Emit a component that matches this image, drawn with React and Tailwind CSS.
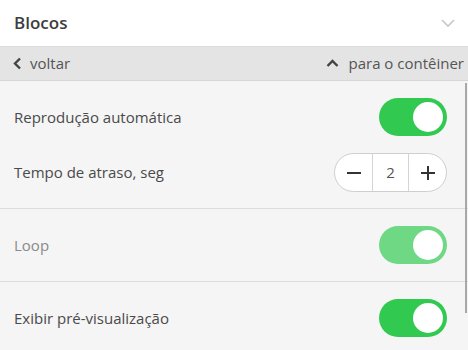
import React, { useState } from "react";

function Toggle({ on, disabled, onClick }) {
    return (
        <button
            onClick={onClick}
            className={`w-[68px] h-[38px] rounded-full flex items-center px-[4px] shrink-0 ${on ? "justify-end" : "justify-start"} ${disabled ? "bg-[#6fd884]" : "bg-[#31c950]"}`}
        >
            <span className="w-[30px] h-[30px] rounded-full bg-white block" />
        </button>
    );
}

export default function App() {
    const [auto, setAuto] = useState(true);
    const [preview, setPreview] = useState(true);
    const [delay, setDelay] = useState(2);

    return (
        <div className="relative w-[468px] h-[350px] overflow-hidden bg-[#f5f5f5] text-[#4a4a4a] font-['Open_Sans',sans-serif]">
            {/* header */}
            <div className="h-[47px] bg-white border-b border-[#dcdcdc] flex items-center justify-between pl-[14px] pr-[12px]">
                <span className="text-[17px] font-semibold text-[#3d3d3d]">Blocos</span>
                <svg width="16" height="10" viewBox="0 0 16 10" fill="none" stroke="#c8c8c8" strokeWidth="1.6">
                    <path d="M2 2l6 6 6-6" />
                </svg>
            </div>

            {/* nav */}
            <div className="h-[34px] bg-[#e4e4e4] border-b border-[#d6d6d6] flex items-center justify-between pl-[13px] pr-[4px] text-[15px] text-[#555]">
                <div className="flex items-center gap-[8px]">
                    <svg width="9" height="13" viewBox="0 0 9 13" fill="none" stroke="#444" strokeWidth="2.4">
                        <path d="M7 1.5l-5 5 5 5" />
                    </svg>
                    <span>voltar</span>
                </div>
                <div className="flex items-center gap-[9px]">
                    <svg width="13" height="9" viewBox="0 0 13 9" fill="none" stroke="#444" strokeWidth="2.4">
                        <path d="M1.5 7l5-5 5 5" />
                    </svg>
                    <span>para o contêiner</span>
                </div>
            </div>

            {/* section 1 */}
            <div className="border-b border-[#dcdcdc] pl-[14px] pr-[21px] pt-[17px] pb-[16px] flex flex-col gap-[17px] text-[15px]">
                <div className="flex items-center justify-between">
                    <span>Reprodução automática</span>
                    <Toggle on={auto} onClick={() => setAuto(!auto)} />
                </div>
                <div className="flex items-center justify-between">
                    <span>Tempo de atraso, seg</span>
                    <div className="w-[113px] h-[39px] rounded-full border border-[#cfcfcf] bg-white flex items-stretch overflow-hidden">
                        <button onClick={() => setDelay(Math.max(0, delay - 1))} className="w-[37px] flex items-center justify-center">
                            <svg width="14" height="2" viewBox="0 0 14 2"><rect width="14" height="2" fill="#333" /></svg>
                        </button>
                        <div className="flex-1 border-x border-[#d4d4d4] flex items-center justify-center text-[15px] text-[#555]">{delay}</div>
                        <button onClick={() => setDelay(delay + 1)} className="w-[37px] flex items-center justify-center">
                            <svg width="14" height="14" viewBox="0 0 14 14"><rect y="6" width="14" height="2" fill="#333" /><rect x="6" width="2" height="14" fill="#333" /></svg>
                        </button>
                    </div>
                </div>
            </div>

            {/* section 2 */}
            <div className="border-b border-[#dcdcdc] pl-[14px] pr-[21px] py-[17px] flex items-center justify-between text-[15px]">
                <span className="text-[#8a8a8a]">Loop</span>
                <Toggle on disabled />
            </div>

            {/* section 3 */}
            <div className="pl-[14px] pr-[21px] pt-[17px] flex items-center justify-between text-[15px]">
                <span>Exibir pré-visualização</span>
                <Toggle on={preview} onClick={() => setPreview(!preview)} />
            </div>

            {/* scrollbar */}
            <div className="absolute right-[1px] top-[83px] w-[2px] h-[230px] bg-[#a8a8a8]" />
        </div>
    );
}
